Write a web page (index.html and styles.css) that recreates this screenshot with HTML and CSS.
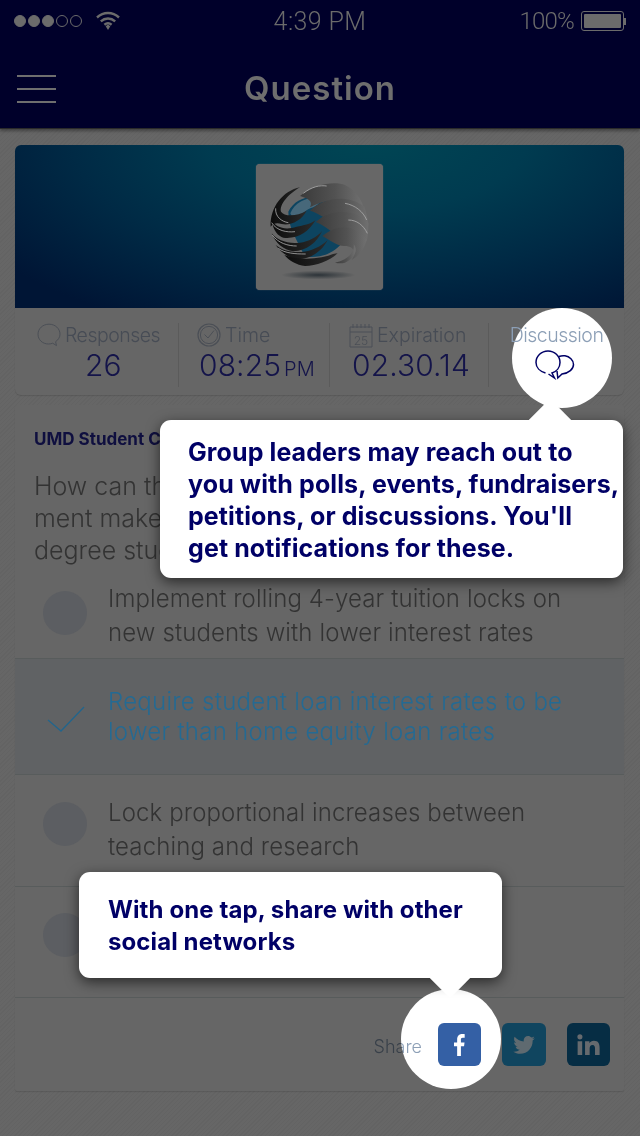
FILE: index.html
```html
<!DOCTYPE html>
<html lang="en">
<head>
<meta charset="utf-8">
<title>Question</title>
<link rel="stylesheet" href="styles.css">
</head>
<body>
<div class="screen">
  <header class="top">
    <div class="status">
      <div class="status-left">
        <span class="sig on"></span><span class="sig on"></span><span class="sig on"></span><span class="sig"></span><span class="sig"></span>
        <svg class="wifi" width="24" height="20" viewBox="0 0 24 20"><path d="M1 6.500C7.500 .5 16.500 .5 23 6.500M4.800 10.300C9 6.500 15 6.500 19.200 10.300M8.400 13.800C10.600 12 13.400 12 15.600 13.800" fill="none" stroke="#6b6b6b" stroke-width="2.400"/><path d="M9.700 15.200L12 13.600L14.300 15.200L12 19Z" fill="#6b6b6b"/></svg>
      </div>
      <div class="clock">4:39 PM</div>
      <div class="status-right">
        <span class="pct">100%</span>
        <span class="battery"><span class="battery-fill"></span></span><span class="battery-tip"></span>
      </div>
    </div>
    <nav class="nav">
      <div class="burger"><i></i><i></i><i></i></div>
      <h1 class="title">Question</h1>
    </nav>
  </header>

  <main class="content">
    <section class="card summary">
      <div class="hero">
        <div class="logo-box">
          <svg width="127" height="120" viewBox="3 0 381 360">
            <defs>
              <linearGradient id="dk" x1="0" y1="0" x2="1" y2="0"><stop offset="0" stop-color="#0c0c0c"/><stop offset="1" stop-color="#2b2b2b"/></linearGradient>
              <linearGradient id="gr" x1="0" y1="0" x2="1" y2="0"><stop offset="0" stop-color="#3a3a3a"/><stop offset=".55" stop-color="#525252"/><stop offset="1" stop-color="#707070"/></linearGradient>
              <radialGradient id="sh"><stop offset="0" stop-color="#2c3338"/><stop offset="1" stop-color="#666"/></radialGradient>
            </defs>
            <ellipse cx="190" cy="315" rx="110" ry="13" fill="url(#sh)"/>
            <path d="M100 125C120 85 170 70 210 90C260 110 278 170 262 218C235 250 200 265 150 260C120 200 100 170 100 125Z" fill="#0d4460"/>
            <path d="M106 130C118 100 150 82 190 82C200 95 190 105 175 112C155 118 140 130 132 145C120 148 110 140 106 130Z" fill="#47687a"/>
            <g fill="url(#gr)">
              <path d="M135 78C175 42 240 32 270 45C300 60 318 85 325 110C280 85 225 82 165 112C175 95 160 85 135 78Z"/>
              <path d="M165 122C205 82 280 72 328 110C335 130 338 145 340 165C300 125 260 128 218 150C205 140 185 128 165 122Z"/>
              <path d="M182 156C225 118 290 112 340 158C340 178 339 195 335 215C310 175 280 175 238 192C222 178 202 164 182 156Z"/>
              <path d="M202 198C250 158 300 165 335 208C330 235 315 255 290 270C305 245 295 228 268 228C245 228 222 208 202 198Z"/>
              <path d="M240 278C280 270 300 245 296 222C310 240 300 265 270 278C262 280 250 280 240 278Z"/>
            </g>
            <g fill="url(#dk)">
              <path d="M47 170C45 110 85 62 135 52C100 72 72 105 78 125C88 140 125 140 155 122C140 152 105 168 80 162C65 158 55 160 47 170Z"/>
              <path d="M50 150C62 172 90 182 125 170C145 166 165 163 182 150C160 188 125 208 85 203C70 198 55 185 50 150Z"/>
              <path d="M50 190C65 210 95 222 135 218C160 214 185 202 202 182C185 218 155 242 115 244C85 240 62 220 50 190Z"/>
              <path d="M62 225C80 240 105 248 140 246C170 243 198 230 218 210C198 248 165 266 130 268C100 264 78 248 62 225Z"/>
              <path d="M88 255C115 265 155 270 200 262C220 258 238 250 248 250C225 272 185 288 150 288C125 285 102 272 88 255Z"/>
            </g>
            <g fill="none" stroke="#a8a8a8" stroke-width="2.500">
              <path d="M62 115C60 140 80 155 100 158"/>
              <path d="M50 158C65 182 95 188 120 185"/>
              <path d="M52 195C70 220 100 228 125 228"/>
              <path d="M70 235C90 250 120 252 152 252"/>
              <path d="M270 100C300 105 325 125 335 150"/>
              <path d="M280 150C305 150 325 165 337 190"/>
              <path d="M145 70C170 50 195 45 215 48"/>
            </g>
          </svg>
        </div>
      </div>
      <div class="stats">
        <div class="stat stat-responses">
          <div class="stat-label">
            <svg width="24" height="24" viewBox="0 0 24 24"><path d="M12 1.200C5.800 1.200 1 5.600 1 11.200S5.500 21 11.500 21c1.500 0 3 -.3 4.200 -.8L19.500 22.600L18.600 18.700C21.400 16.800 23 14 23 11.200C23 5.600 18.200 1.200 12 1.200Z" fill="none" stroke="#4b4f56" stroke-width="1"/></svg>
            <span class="tight">Responses</span>
          </div>
          <div class="stat-value">26</div>
        </div>
        <div class="stat stat-time">
          <div class="stat-label">
            <svg width="24" height="24" viewBox="0 0 24 24"><circle cx="12" cy="12" r="11" fill="none" stroke="#4b4f56" stroke-width="1.200"/><circle cx="12" cy="12" r="8.600" fill="none" stroke="#4b4f56" stroke-width="1"/><path d="M7.500 11.500L11 15L17 7.500" fill="none" stroke="#4b4f56" stroke-width="1"/></svg>
            <span>Time</span>
          </div>
          <div class="stat-value">08:25<small>PM</small></div>
        </div>
        <div class="stat stat-exp">
          <div class="stat-label">
            <svg width="24" height="25" viewBox="0 0 24 25"><path d="M1 4H23V24H1ZM1 9H23" fill="none" stroke="#4b4f56" stroke-width="1"/><path d="M4 1V5M8 1V5M12 1V5M16 1V5M20 1V5" stroke="#4b4f56" stroke-width="1"/><text x="12" y="21.500" text-anchor="middle" class="cal-num">25</text></svg>
            <span>Expiration</span>
          </div>
          <div class="stat-value">02.30.14</div>
        </div>
        <div class="stat stat-disc">
          <div class="stat-label blend"><span class="tight">Discussion</span></div>
          <svg class="disc-icon" width="40" height="30" viewBox="0 0 40 30"><path d="M10.500 23C5 21.500 1 17.500 1 12.500C1 6 6.500 1 13 1S25 6 25 12.500C25 17.500 21.500 21.500 17 23L19.500 28L13.500 24" fill="none" stroke="#000066" stroke-width="1.500"/><path d="M24 6.500C26 5.700 28 5.500 30 5.800C34.500 6.500 38.500 10 38.500 14.500C38.500 19 34 23 27 24L22.800 28L22 21" fill="none" stroke="#000066" stroke-width="1.500"/></svg>
        </div>
      </div>
    </section>

    <section class="card poll">
      <div class="poll-head">
        <h2 class="group">UMD Student Council</h2>
        <p class="question">How can the federal govern-<br>ment make college affordable<br>degree students?</p>
      </div>
      <div class="option opt-first">
        <span class="radio"></span>
        <p>Implement rolling 4-year tuition locks on<br>new students with lower interest rates</p>
      </div>
      <div class="option opt-selected">
        <svg class="check" width="38" height="26" viewBox="0 0 38 26"><path d="M1 14L14 25L37 1" fill="none" stroke="#22658c" stroke-width="1.300"/></svg>
        <p>Require student loan interest rates to be<br>lower than home equity loan rates</p>
      </div>
      <div class="option opt-third">
        <span class="radio"></span>
        <p>Lock proportional increases between<br>teaching and research</p>
      </div>
      <div class="option opt-fourth">
        <span class="radio"></span>
      </div>
      <div class="share">
        <span class="share-label blend">Share</span>
        <span class="soc soc-fb"><svg width="11" height="22" viewBox="0 0 14 26" preserveAspectRatio="none"><path d="M4 26V14.500H0V10H4V6.500C4 2.500 6.500 0 10.200 0C11.800 0 13.200 .1 13.600 .2V4.300H11.100C9.200 4.300 8.800 5.200 8.800 6.600V10H13.400L12.800 14.500H8.800V26Z" fill="#fff"/></svg></span>
        <span class="soc soc-tw"><svg width="22" height="18" viewBox="0 0 30 25"><path d="M30 3C28.900 3.500 27.700 3.800 26.500 4C27.800 3.200 28.700 2 29.200 .6C28 1.300 26.700 1.800 25.300 2.100C24.100 .8 22.500 0 20.700 0C17.300 0 14.500 2.800 14.500 6.200C14.500 6.700 14.600 7.200 14.700 7.600C9.600 7.300 5 4.900 2 1.100C1.500 2 1.200 3.100 1.200 4.200C1.200 6.400 2.300 8.300 4 9.400C3 9.400 2 9.100 1.200 8.600V8.700C1.200 11.700 3.300 14.200 6.100 14.800C5.100 15.100 4 15.100 3.300 14.900C4.100 17.400 6.400 19.200 9.100 19.200C7 20.900 4.300 21.900 1.400 21.900H0C2.800 23.700 6 24.700 9.500 24.700C20.800 24.700 27 15.300 27 7.200V6.400C28.200 5.500 29.200 4.400 30 3Z" fill="#5f6a70"/></svg></span>
        <span class="soc soc-in"><svg width="23" height="21" viewBox="0 0 30 26" preserveAspectRatio="none"><circle cx="3.800" cy="3.500" r="3.300" fill="#666a6e"/><path d="M.8 9H6.800V26H.8ZM10.500 9H16.200V11.500C17.200 9.800 19.200 8.500 22 8.500C27.800 8.500 29.500 12 29.500 17.200V26H23.500V18.200C23.500 15.700 23 13.500 20.300 13.500C17.500 13.500 16.500 15.500 16.500 18V26H10.500Z" fill="#666a6e"/></svg></span>
      </div>
    </section>
  </main>

  <div class="spot spot-disc"></div>
  <div class="spot spot-share"></div>

  <aside class="tip tip-disc">Group leaders may reach out to<br>you with polls, events, fundraisers,<br>petitions, or discussions. You'll<br>get notifications for these.</aside>
  <aside class="tip tip-share">With one tap, share with other<br>social networks</aside>
</div>
</body>
</html>
```
FILE: styles.css
```css
* { box-sizing: border-box; }
html, body { margin: 0; padding: 0; }
body {
  font-family: Inter, "Liberation Sans", sans-serif;
  background: #5f5f5f;
}
.screen {
  position: relative;
  width: 640px;
  height: 1136px;
  overflow: hidden;
  background: repeating-linear-gradient(135deg, #636363 0 1px, #666 1px 3px);
}
/* header */
.top {
  height: 129px;
  background: #00002a;
  border-bottom: 1px solid #2a2a2a;
  box-shadow: 0 2px 3px rgba(0,0,0,.35);
}
.status {
  height: 42px;
  display: grid;
  grid-template-columns: 1fr auto 1fr;
  align-items: center;
  padding: 0 14px;
  color: #6b6b6b;
  font-family: Roboto, sans-serif;
  font-weight: 300;
  font-size: 25px;
}
.status-left { display: flex; align-items: center; gap: 2px; }
.sig { width: 12px; height: 12px; border-radius: 50%; border: 1px solid #6b6b6b; }
.sig.on { background: #6b6b6b; }
.wifi { margin-left: 12px; }
.status-right { display: flex; align-items: center; justify-content: flex-end; }
.pct { letter-spacing: -.8px; font-size: 24px; }
.battery { width: 43px; height: 20px; border: 1px solid #6b6b6b; border-radius: 3px; padding: 2px; margin-left: 7px; }
.battery-fill { display: block; height: 100%; background: #6b6b6b; border-radius: 1px; }
.battery-tip { width: 2px; height: 7px; background: #6b6b6b; }
.clock { letter-spacing: .4px; }
.nav {
  height: 86px;
  display: flex;
  align-items: center;
  justify-content: center;
  position: relative;
  padding-top: 6px;
}
.burger {
  position: absolute;
  left: 17px;
  top: 33px;
  width: 39px;
  display: flex;
  flex-direction: column;
  gap: 11px;
}
.burger i { display: block; height: 2px; background: #6e6e6e; }
.title { margin: 0; font-size: 33px; font-weight: 600; letter-spacing: 1px; color: #6e6e6e; line-height: 1; }

/* content */
.content { padding: 16px 16px 0 15px; display: flex; flex-direction: column; gap: 10px; }
.card { background: #666; border-radius: 6px; box-shadow: 0 1px 1px rgba(0,0,0,.12); }
.hero {
  height: 163px;
  border-radius: 6px 6px 0 0;
  background: radial-gradient(ellipse 75% 130% at 58% -5%, #004654 0, #003b50 35%, #002a45 65%, #001535 100%);
  display: flex;
  justify-content: center;
  padding-top: 19px;
}
.logo-box {
  width: 127px;
  height: 126px;
  background: #676767;
  border-radius: 4px;
  padding-top: 6px;
  box-shadow: 0 0 1px #777;
  overflow: hidden;
}
.logo-box svg { display: block; }
.stats { height: 87px; display: grid; grid-template-columns: 164px 151px 159px 135px; padding: 15px 0 16px; }
.stat { border-right: 1px solid #5b5b5b; display: flex; flex-direction: column; align-items: flex-start; }
.stat-responses { padding-left: 22px; }
.stat-responses .stat-value { margin-left: 48px; }
.stat-time { padding-left: 18px; }
.stat-time .stat-value { margin-left: 2px; }
.stat-exp { padding-left: 19px; }
.stat-exp .stat-value { margin-left: 3px; }
.stat-disc { border-right: 0; position: relative; z-index: 2; align-items: center; }
.stat-label { display: flex; align-items: center; gap: 4px; height: 24px; font-size: 19.500px; font-weight: 300; color: #474c55; }
.tight { letter-spacing: -.5px; }
.stat-value { font-size: 30px; letter-spacing: .1px; font-weight: 300; color: #14144a; line-height: 36px; }
.stat-value small { font-size: 20px; margin-left: 3px; }
.cal-num { font-family: Inter, sans-serif; font-size: 12px; fill: #4b4f56; }
.blend { mix-blend-mode: multiply; color: #8c9fb6; position: relative; z-index: 2; }
.disc-icon { margin: 3px 0 0 -3px; }

.poll { border-radius: 2px; height: 686px; display: flex; flex-direction: column; }
.poll-head { padding: 24px 18px 0 19px; height: 170px; }
.group { margin: 0 0 21px; font-size: 17px; font-weight: 700; color: #0f0f3f; line-height: 20px; }
.question { margin: 0; font-size: 25px; font-weight: 300; line-height: 32px; color: #333; }
.option { display: flex; align-items: center; border-bottom: 1px solid #585c5c; padding-left: 28px; }
.option p { margin: 0; font-size: 24px; letter-spacing: .12px; font-weight: 300; color: #333; }
.radio { flex: none; width: 44px; height: 44px; border-radius: 50%; background: #5c5e62; margin-right: 21px; }
.opt-first { height: 84px; line-height: 34px; }
.opt-first .radio { margin-top: -7px; }
.opt-first p { margin-top: -2px; }
.opt-selected { height: 116px; background: #606264; line-height: 30px; padding-left: 32px; }
.opt-selected p { color: #246a93; margin-left: 23px; margin-top: 0; line-height: 30px; letter-spacing: .27px; }
.check { flex: none; margin-top: 4px; margin-left: 0; }
.opt-third { height: 112px; line-height: 34px; }
.opt-third p { margin-top: -2px; }
.opt-third .radio { margin-bottom: 14px; }
.opt-fourth { height: 111px; }
.opt-fourth .radio { margin-bottom: 14px; }
.share { flex: 1; display: flex; align-items: center; justify-content: flex-end; padding-right: 14px; }
.share-label { font-size: 18px; font-weight: 300; margin: 3px 16px 0 0; }
.soc { width: 43px; height: 43px; border-radius: 6px; display: flex; align-items: center; justify-content: center; margin-left: 21px; position: relative; z-index: 2; }
.share-label + .soc { margin-left: 0; }
.soc-fb { background: #3460a5; }
.soc-tw { background: #10455f; width: 44px; }
.soc-in { background: #062d44; }

/* coach marks */
.spot { position: absolute; width: 100px; height: 100px; border-radius: 50%; background: #fff; z-index: 1; }
.spot-disc { left: 512px; top: 308px; }
.spot-share { left: 401px; top: 989px; }
.tip {
  position: absolute;
  z-index: 3;
  background: #fff;
  border-radius: 11px;
  color: #000066;
  font-weight: 700;
  line-height: 32px;
  white-space: nowrap;
  box-shadow: 0 4px 14px rgba(0,0,0,.6);
}
.tip::after {
  content: "";
  position: absolute;
  width: 30px;
  height: 30px;
  background: #fff;
  transform: rotate(45deg);
}
.tip-disc { left: 160px; top: 420px; width: 463px; height: 158px; padding: 16px 0 0 28px; font-size: 25px; letter-spacing: .1px; }
.tip-disc::after { left: 375px; top: -15px; }
.tip-share { left: 79px; top: 872px; width: 423px; height: 106px; padding: 22px 20px 0 29px; font-size: 24px; letter-spacing: .1px; }
.tip-share::after { left: 356px; bottom: -14px; }
```
